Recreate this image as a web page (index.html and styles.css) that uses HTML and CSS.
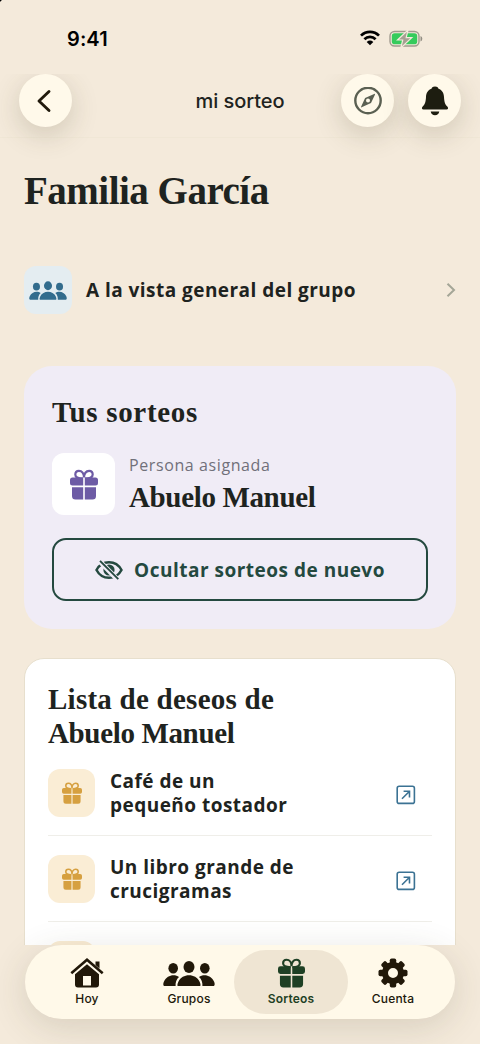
FILE: index.html
```html
<!DOCTYPE html>
<html lang="es">
<head>
<meta charset="utf-8">
<title>mi sorteo</title>
<link rel="stylesheet" href="styles.css">
</head>
<body>
<svg class="defs" width="0" height="0">
  <symbol id="gift" viewBox="0 0 28 30">
    <path d="M13 9C8 9 5.3 7.800 5.300 4.900C5.300 2.800 6.800 1.300 8.900 1.300C12 1.300 14 4.300 14 8C14 4.300 16 1.300 19.100 1.300C21.200 1.300 22.700 2.800 22.700 4.900C22.700 7.800 20 9 15 9" fill="none" stroke="currentColor" stroke-width="2.200"/>
    <path d="M2.500 8H13.200V16H2.500Q0 16 0 13.500V10.500Q0 8 2.500 8ZM14.800 8H25.500Q28 8 28 10.500V13.500Q28 16 25.500 16H14.800ZM2 17.800H13.200V30H5.500Q2 30 2 26.500ZM14.800 17.800H26V26.500Q26 30 22.500 30H14.800Z" fill="currentColor"/>
  </symbol>
  <symbol id="people" viewBox="0 0 52 25">
    <g fill="currentColor"><ellipse cx="26" cy="6" rx="5.500" ry="6"/><ellipse cx="10.200" cy="7.200" rx="4.800" ry="5.200"/><ellipse cx="41.800" cy="7.200" rx="4.800" ry="5.200"/>
    <path d="M15 25C14 25 14.500 22.500 15.500 20.500C17.500 16.500 21.500 14.300 26 14.300S34.500 16.500 36.500 20.500C37.500 22.500 38 25 37 25ZM1.500 25C0 25 0 22.500 1 20.500C3 16.500 6.500 14.300 10.500 14.300C12.500 14.300 14.500 14.800 16 15.900C13.500 18 12.300 21.500 12.600 25ZM50.500 25C52 25 52 22.500 51 20.500C49 16.500 45.500 14.300 41.500 14.300C39.500 14.300 37.500 14.800 36 15.900C38.500 18 39.700 21.500 39.400 25Z"/></g>
  </symbol>
  <symbol id="open" viewBox="0 0 20 20">
    <g fill="none" stroke="currentColor" stroke-width="1.600"><rect x="1.200" y="1.200" width="17.200" height="17.200" rx="2"/><path d="M6 13.800L13.300 6.500M7.600 6.300H13.500V12.400"/></g>
  </symbol>
</svg>
<div class="app">
  <div class="status">
    <span class="clock">9:41</span>
    <span class="indicators">
      <svg width="20" height="16" viewBox="0 0 20 16"><g fill="none" stroke="#000" stroke-width="2.700"><path d="M1 5.600C6 .6 14 .6 19 5.600"/><path d="M4.400 9.200C7.500 6.100 12.500 6.100 15.600 9.200"/></g><path d="M6.700 12Q10 9.100 13.300 12L10 15.300Z"/></svg>
      <svg width="34" height="18" viewBox="0 0 34 18"><rect x="1" y="1.500" width="29" height="14.500" rx="4.500" fill="none" stroke="#a09b8e" stroke-width="1.400"/><rect x="2.800" y="3.300" width="25.400" height="10.900" rx="2.800" fill="#35cb5c"/><path d="M31.500 6V11.500Q33.300 10.700 33.300 8.750T31.500 6Z" fill="#928e83"/><path d="M19 0L8.500 10H13.700L11.800 18L22.800 7.600H17.200Z" fill="#a5a092" stroke="#f4eadb" stroke-width="1.200"/></svg>
    </span>
  </div>
  <header class="header">
    <button class="round back"><svg width="16" height="24" viewBox="0 0 16 24"><path d="M13 2.500L3 12L13 21.500" fill="none" stroke="#211a0c" stroke-width="2.900" stroke-linecap="round" stroke-linejoin="round"/></svg></button>
    <h1 class="screen-title">mi sorteo</h1>
    <div class="actions">
      <button class="round"><svg width="28" height="28" viewBox="0 0 28 28"><circle cx="14" cy="13.500" r="12.700" fill="none" stroke="#5b6052" stroke-width="2.400"/><path fill-rule="evenodd" d="M20.700 6.800Q21.300 6.900 20.800 8L17 15.900L7.600 20.300Q6.600 20.700 7.200 19.500L11.100 11.100ZM14 11.500A2 2 0 1 0 14 15.500A2 2 0 1 0 14 11.500Z" fill="#5b6052"/></svg></button>
      <button class="round"><svg width="28" height="30" viewBox="0 0 28 30"><path d="M14 .5C16.500 .5 17.300 1.800 17.500 2.700C21.300 4 22.800 7 23 11C23.200 16 24.200 18.500 26.300 20.500C27.600 21.900 27.200 23.600 25.500 23.600H2.500C.8 23.600 .4 21.900 1.700 20.500C3.800 18.500 4.800 16 5 11C5.200 7 6.700 4 10.500 2.700C10.700 1.800 11.500 .5 14 .5ZM9.700 25.500H18.300Q17.500 29.300 14 29.300T9.700 25.500Z" fill="#1d1d10"/></svg></button>
    </div>
  </header>
  <main class="content">
    <h2 class="group-name">Familia García</h2>
    <a class="group-link">
      <span class="tile blue"><svg width="38" height="19"><use href="#people"/></svg></span>
      <span class="link-label">A la vista general del grupo</span>
      <svg class="chevron" width="10" height="16" viewBox="0 0 10 16"><path d="M1.500 1.800L8 8L1.500 14.200" fill="none" stroke="#a4a697" stroke-width="2"/></svg>
    </a>
    <section class="draw-card">
      <h3 class="heading tus">Tus sorteos</h3>
      <div class="person">
        <span class="tile big"><svg width="28" height="31"><use href="#gift"/></svg></span>
        <div class="person-text"><p class="caption">Persona asignada</p><p class="heading name">Abuelo Manuel</p></div>
      </div>
      <button class="hide-button">
        <svg width="28" height="20" viewBox="0 0 28 20"><path d="M1.500 10C7 -.4 21 -.4 26.500 10C21 20.400 7 20.400 1.500 10Z" fill="none" stroke="#24493f" stroke-width="2.500"/><circle cx="14" cy="10" r="5.600" fill="#24493f"/><path d="M10.500 9Q11 7 13 6.500" stroke="#f0ecf6" stroke-width="1.300" fill="none"/><path d="M4 .6L22.500 19.600" stroke="#f0ecf6" stroke-width="5"/><path d="M5 .8L23.300 19.200" stroke="#24493f" stroke-width="1.900"/></svg>
        <span>Ocultar sorteos de nuevo</span>
      </button>
    </section>
    <section class="wish-card">
      <h3 class="heading wish-title">Lista de deseos de<br><span class="name">Abuelo Manuel</span></h3>
      <ul class="wishes">
        <li class="wish"><span class="tile gold"><svg width="20" height="22"><use href="#gift"/></svg></span><span class="wish-name">Café de un<br>pequeño tostador</span><svg class="open" width="20" height="20"><use href="#open"/></svg></li>
        <li class="wish"><span class="tile gold"><svg width="20" height="22"><use href="#gift"/></svg></span><span class="wish-name">Un libro grande de<br>crucigramas</span><svg class="open" width="20" height="20"><use href="#open"/></svg></li>
        <li class="wish"><span class="tile gold"></span></li>
      </ul>
    </section>
  </main>
  <footer class="dock">
    <nav class="tabs">
      <a class="tab"><svg width="34" height="30" viewBox="0 0 34 30"><path d="M1.300 15.200L17 1.800L32.700 15.200" fill="none" stroke="currentColor" stroke-width="2.600"/><path fill-rule="evenodd" d="M17 6.200L29 16.300V26.500Q29 29.500 26 29.500H8Q5 29.500 5 26.500V16.300ZM13 18V27.500H21V18Z" fill="currentColor"/><path d="M25.500 3.500H29.500V10.500L25.500 7Z" fill="currentColor"/></svg><span>Hoy</span></a>
      <a class="tab"><svg width="52" height="30" viewBox="0 -3 52 30"><use href="#people" width="52" height="25"/></svg><span>Grupos</span></a>
      <a class="tab active"><svg width="27" height="30"><use href="#gift"/></svg><span>Sorteos</span></a>
      <a class="tab"><svg width="30" height="30" viewBox="-15 -15 30 30"><g fill="currentColor"><path fill-rule="evenodd" d="M0-11A11 11 0 1 0 0 11A11 11 0 1 0 0-11ZM0-5A5 5 0 1 1 0 5A5 5 0 1 1 0-5Z"/><g id="teeth"><rect x="-3.200" y="-14.500" width="6.400" height="6" rx="1.800"/><rect x="-3.200" y="8.500" width="6.400" height="6" rx="1.800"/><rect x="-14.500" y="-3.200" width="6" height="6.400" rx="1.800"/><rect x="8.500" y="-3.200" width="6" height="6.400" rx="1.800"/></g><use href="#teeth" transform="rotate(45)"/></g></svg><span>Cuenta</span></a>
    </nav>
  </footer>
</div>
</body>
</html>
```
FILE: styles.css
```css
* { box-sizing: border-box; }
body, h1, h2, h3, p, ul { margin: 0; padding: 0; }
body { background: #f4eadb; color: #1e2320; font-family: "Open Sans", "Noto Sans", sans-serif; }
button { border: 0; padding: 0; background: none; font: inherit; color: inherit; }
svg { display: block; flex: none; }
.defs { position: absolute; }
.app {
  display: flex; flex-direction: column; width: 480px; height: 1044px; overflow: hidden;
  background: radial-gradient(circle at 0 0, #000 1px, transparent 2px) #f4eadb;
}
.status { height: 74px; flex: none; display: flex; justify-content: space-between; padding: 27px 57px 0 67px; }
.clock { font: 600 20px/24px Inter, sans-serif; letter-spacing: .1px; color: #000; }
.indicators { display: flex; gap: 9px; padding-top: 3px; }
.header {
  height: 64px; flex: none; display: grid; grid-template-columns: 120px 1fr 120px; padding: 0 19px;
  clip-path: inset(0 0 -40px 0); border-bottom: 1px solid #f0e7d6;
}
.round {
  width: 53px; height: 53px; border-radius: 50%; background: #fff9ea; display: flex; align-items: center; justify-content: center;
  box-shadow: 0 8px 28px rgba(70, 65, 35, .2);
}
.back { padding-right: 4px; }
.screen-title { font: 500 20px/54px Inter, sans-serif; text-align: center; letter-spacing: -.05px; }
.actions { display: flex; gap: 14px; justify-content: flex-end; }
.content { flex: 1; min-height: 0; overflow: hidden; padding: 28px 24px 0; }
.group-name { font: 700 39px/50px "Liberation Serif", serif; letter-spacing: -.5px; }
.group-link { display: flex; align-items: center; height: 48px; margin-top: 50px; }
.tile { width: 48px; height: 48px; border-radius: 12px; flex: none; display: flex; align-items: center; justify-content: center; }
.blue { background: #e4edf1; color: #326c8d; }
.link-label { flex: 1; margin-left: 14px; font-size: 19px; font-weight: 700; letter-spacing: .46px; white-space: nowrap; }
.draw-card { height: 263px; margin-top: 52px; padding: 29px 28px 28px; border-radius: 28px; background: #f0ecf6; }
.heading { font: 700 29px/34px "Liberation Serif", serif; white-space: nowrap; }
.tus { letter-spacing: .7px; }
.name { letter-spacing: -.35px; }
.person { display: flex; gap: 14px; margin-top: 24px; }
.big { width: 63px; height: 62px; background: #fff; color: #6d5ba5; }
.caption { font-size: 16px; line-height: 24px; color: #70707a; letter-spacing: .6px; }
.person-text .heading { margin-top: 3px; }
.hide-button {
  width: 376px; height: 63px; margin-top: 23px; border: 2px solid #24493f; border-radius: 14px; color: #24493f;
  display: flex; align-items: center; justify-content: center; gap: 11px; font-size: 19px; font-weight: 700; letter-spacing: .5px; white-space: nowrap;
}
.wish-card { margin-top: 29px; padding: 23px; height: 360px; background: #fff; border: 1px solid #e7dfcd; border-radius: 20px; }
.wish-title { letter-spacing: .25px; }
.wishes { list-style: none; }
.wish { display: flex; align-items: center; height: 86px; padding-right: 16px; border-bottom: 1px solid #efeee9; }
.gold { width: 47px; background: #faedd5; color: #d6a040; }
.wish-name { flex: 1; margin-left: 15px; font-size: 19px; line-height: 24px; font-weight: 700; letter-spacing: .47px; }
.open { color: #3b7293; margin-top: 5px; }
.dock { height: 99px; flex: none; padding: 0 25px; position: relative; }
.tabs {
  height: 74px; border-radius: 37px; background: #fff9e9; padding: 5px 11px; display: grid; grid-template-columns: repeat(4, 1fr);
  box-shadow: 0 8px 36px rgba(70, 65, 35, .16);
}
.tab { height: 64px; padding-top: 8px; display: flex; flex-direction: column; align-items: center; color: #211809; }
.tab span { font: 500 12px/16px Inter, sans-serif; letter-spacing: .2px; margin-top: 3px; }
.active { margin: 0 -6px; border-radius: 32px; background: #efe5d3; color: #1e4024; }
.active span { font-weight: 600; letter-spacing: .2px; }
```
